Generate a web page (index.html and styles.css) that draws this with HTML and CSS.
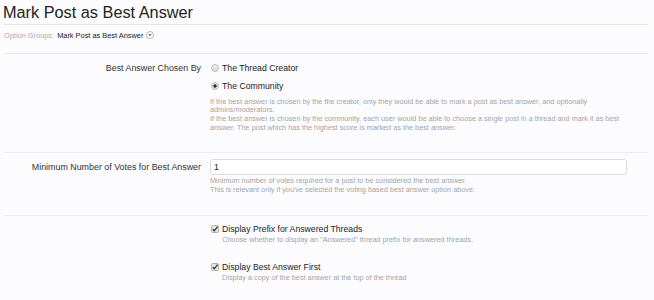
FILE: index.html
```html
<!DOCTYPE html>
<html lang="en">
<head>
  <meta charset="UTF-8">
  <title>Mark Post as Best Answer</title>
  <link rel="stylesheet" href="styles.css">
</head>
<body>
  <div class="page">
    <h1 class="title">Mark Post as Best Answer</h1>
    <div class="groups">
      <span class="groups-label">Option Groups:</span>
      <span class="groups-value">Mark Post as Best Answer</span>
      <span class="groups-toggle">
        <svg width="8" height="8" viewBox="0 0 8 8"><circle cx="4" cy="4" r="3.5" fill="#fff" stroke="#9a9a9a" stroke-width="0.7"/><path d="M2.3 3.2 L5.7 3.2 L4 5.1 Z" fill="#444"/></svg>
      </span>
    </div>

    <form class="options">
      <div class="option-row row-radio">
        <div class="option-label">Best Answer Chosen By</div>
        <div class="option-control">
          <label class="choice"><input type="radio" name="chosen" class="radio"> The Thread Creator</label>
          <label class="choice"><input type="radio" name="chosen" class="radio" checked> The Community</label>
          <p class="explain">If the best answer is chosen by the the creator, only they would be able to mark a post as best answer, and optionally admins/moderators.<br>If the best answer is chosen by the community, each user would be able to choose a single post in a thread and mark it as best answer. The post which has the highest score is marked as the best answer.</p>
        </div>
      </div>

      <div class="option-row row-input">
        <div class="option-label label-input">Minimum Number of Votes for Best Answer</div>
        <div class="option-control">
          <input type="text" class="text-input" value="1">
          <p class="explain">Minimum number of votes required for a post to be considered the best answer.<br>This is relevant only if you've selected the voting based best answer option above.</p>
        </div>
      </div>

      <div class="option-row row-check">
        <div class="option-label"></div>
        <div class="option-control">
          <label class="choice">
            <span class="check"><svg width="8" height="8" viewBox="0 0 8 8"><rect x="0.5" y="0.5" width="7" height="7" rx="1" fill="#e4e4e4" stroke="#b5b5b5"/><path d="M1.8 4.2 L3.3 5.8 L6.6 1.6" fill="none" stroke="#333" stroke-width="1.3"/></svg></span>
            Display Prefix for Answered Threads
          </label>
          <p class="explain sub">Choose whether to display an "Answered" thread prefix for answered threads.</p>
          <label class="choice second">
            <span class="check"><svg width="8" height="8" viewBox="0 0 8 8"><rect x="0.5" y="0.5" width="7" height="7" rx="1" fill="#e4e4e4" stroke="#b5b5b5"/><path d="M1.8 4.2 L3.3 5.8 L6.6 1.6" fill="none" stroke="#333" stroke-width="1.3"/></svg></span>
            Display Best Answer First
          </label>
          <p class="explain sub">Display a copy of the best answer at the top of the thread</p>
        </div>
      </div>
    </form>
  </div>
</body>
</html>
```

FILE: styles.css
```css
body {
  margin: 0;
  background: #fcfcff;
  font-family: "Liberation Sans", Arial, sans-serif;
  color: #333;
}
.page {
  width: 644px;
  padding: 0 6px 0 4px;
}
.title {
  font-size: 16.3px;
  font-weight: normal;
  color: #222;
  margin: 0;
  height: 22px;
  line-height: 20px;
  padding-top: 2px;
  text-indent: -1px;
  border-bottom: 1px solid #e4e6ea;
}
.groups {
  font-size: 7.4px;
  height: 10px;
  padding: 5px 0 13px;
  border-bottom: 1px solid #e6eef1;
  display: flex;
  align-items: center;
  gap: 3px;
}
.groups-label {
  color: #aaa;
}
.groups-value {
  color: #222;
}
.groups-toggle {
  display: inline-flex;
}
.option-row {
  display: flex;
  border-bottom: 1px solid #e6eef1;
}
.row-radio {
  padding: 7px 0 19px;
}
.row-input {
  padding: 6px 0 20px;
}
.row-check {
  padding: 6px 0 20px;
  border-bottom: none;
}
.option-label {
  width: 197px;
  flex: none;
  text-align: right;
  font-size: 8.9px;
  line-height: 14px;
  color: #333;
}
.label-input {
  line-height: 16px;
}
.option-control {
  flex: 1;
  padding-left: 9px;
  padding-right: 21px;
}
.choice {
  display: flex;
  align-items: center;
  font-size: 8.7px;
  color: #222;
  height: 14px;
}
.choice + .choice {
  margin-top: 4px;
}
.radio {
  appearance: none;
  margin: 0 3px 0 1px;
  width: 8px;
  height: 8px;
  border-radius: 50%;
  border: 1px solid #bcbcbc;
  background: linear-gradient(#f2f2f2, #d8d8d8);
  box-sizing: border-box;
}
.radio:checked {
  background: radial-gradient(circle, #333 0, #333 1.4px, #e6e6e6 1.9px, #dcdcdc 100%);
}
.check {
  display: inline-flex;
  margin: 0 3px 0 1px;
}
.explain {
  font-size: 7.3px;
  color: #a4a4a4;
  margin: 4.5px 0 0;
  line-height: 8.8px;
}
.explain.sub {
  margin-top: 0;
  padding-left: 12px;
}
.second {
  margin-top: 15px;
}
.text-input {
  display: block;
  box-sizing: border-box;
  width: 417px;
  height: 16px;
  margin: 0;
  border: 1px solid #dcdcdc;
  border-radius: 3px;
  background: #fff;
  font-family: inherit;
  font-size: 8.9px;
  padding: 0 3px;
  color: #222;
}
.row-input .explain {
  margin-top: 2.5px;
}
```
